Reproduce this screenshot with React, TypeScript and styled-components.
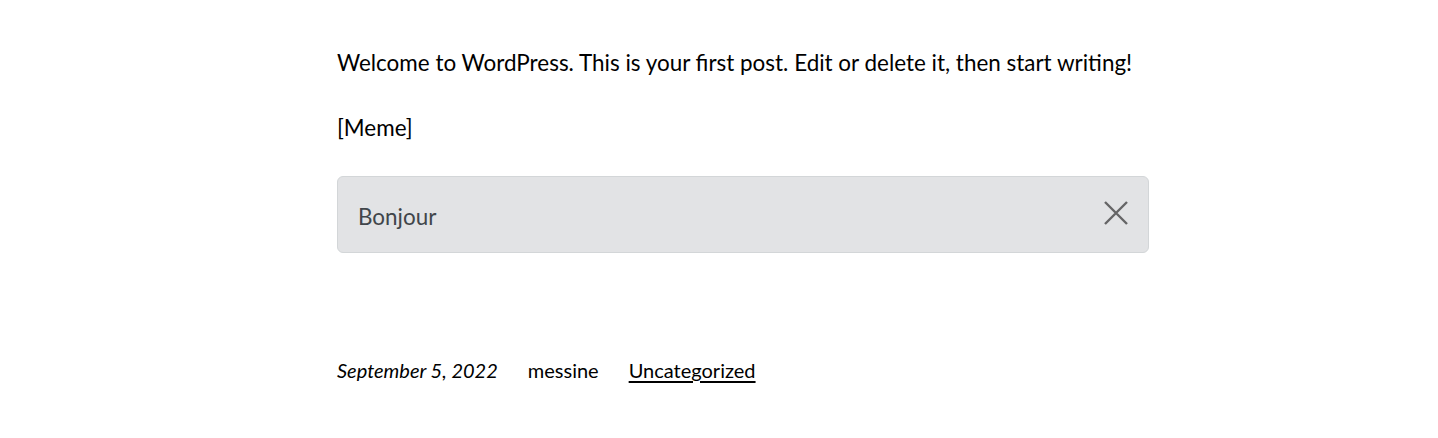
import React from "react";
import styled, { createGlobalStyle } from "styled-components";

const GlobalStyle = createGlobalStyle`
  html, body {
    margin: 0;
    padding: 0;
    background: #ffffff;
  }
  body {
    font-family: "Lato", "Open Sans", sans-serif;
    color: #000000;
  }
`;

const Page = styled.main`
  width: 1438px;
  height: 438px;
  box-sizing: border-box;
  padding: 48px 0 0 337px;
`;

const Entry = styled.article`
  width: 812px;
  display: flex;
  flex-direction: column;
`;

const Paragraph = styled.p<{ $gap: number }>`
  margin: 0 0 ${(p) => p.$gap}px;
  font-size: 22.45px;
  line-height: 30px;
`;

const Alert = styled.div`
  display: flex;
  align-items: center;
  justify-content: space-between;
  height: 77px;
  box-sizing: border-box;
  padding: 0 18px 0 20px;
  background: #e2e3e5;
  border: 1px solid #d3d6d8;
  border-radius: 6px;
  color: #41464b;
  font-size: 22.45px;
`;

const AlertText = styled.span`
  padding-top: 4px;
`;

const CloseButton = styled.button`
  background: none;
  border: none;
  padding: 0;
  width: 28px;
  height: 28px;
  display: flex;
  align-items: center;
  justify-content: center;
  cursor: pointer;
  opacity: 0.55;
  margin-top: -3px;
`;

const Meta = styled.footer`
  display: flex;
  gap: 30px;
  margin-top: 105px;
  font-size: 20px;
`;

const MetaDate = styled.span`
  font-style: italic;
`;

const MetaLink = styled.a`
  color: #000000;
  text-decoration: underline;
  text-underline-offset: 3px;
`;

export default function App() {
  return (
    <>
      <GlobalStyle />
      <Page>
        <Entry>
          <Paragraph $gap={35}>
            Welcome to WordPress. This is your first post. Edit or delete it, then start writing!
          </Paragraph>
          <Paragraph $gap={33}>[Meme]</Paragraph>
          <Alert role="alert">
            <AlertText>Bonjour</AlertText>
            <CloseButton type="button" aria-label="Close">
              <svg width="24" height="24" viewBox="0 0 24 24">
                <path d="M1 1 L23 23 M23 1 L1 23" stroke="#000" strokeWidth="2.4" fill="none" />
              </svg>
            </CloseButton>
          </Alert>
          <Meta>
            <MetaDate>September 5, 2022</MetaDate>
            <span>messine</span>
            <MetaLink href="#">Uncategorized</MetaLink>
          </Meta>
        </Entry>
      </Page>
    </>
  );
}
